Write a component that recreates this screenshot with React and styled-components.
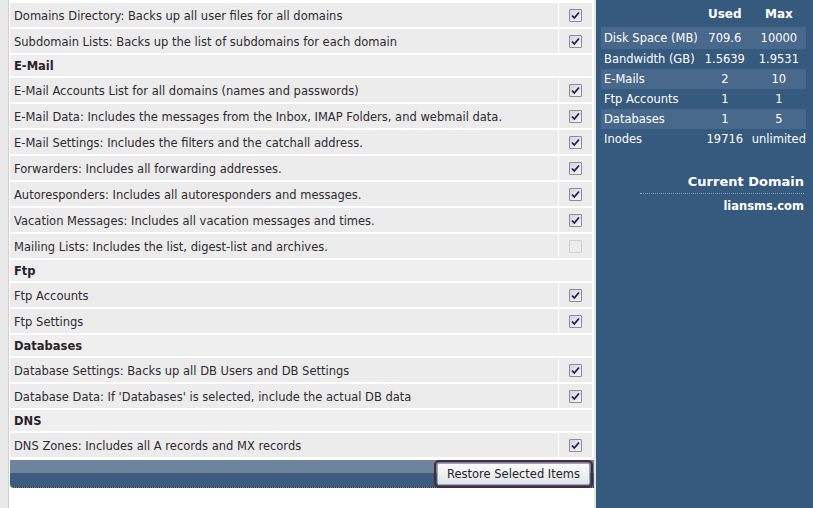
import React from 'react'
import styled, { createGlobalStyle } from 'styled-components'

const GlobalStyle = createGlobalStyle`
	html, body {
		margin: 0;
		padding: 0;
		background: #fff;
	}
	body {
		font-family: "DejaVu Sans", Verdana, sans-serif;
		font-size: 11.5px;
		color: #2f2a30;
	}
`

const sections = [
	{
		items: [
			{ label: 'Domains Directory: Backs up all user files for all domains', checked: true },
			{ label: 'Subdomain Lists: Backs up the list of subdomains for each domain', checked: true },
		],
	},
	{
		title: 'E-Mail',
		items: [
			{ label: 'E-Mail Accounts List for all domains (names and passwords)', checked: true },
			{ label: 'E-Mail Data: Includes the messages from the Inbox, IMAP Folders, and webmail data.', checked: true },
			{ label: 'E-Mail Settings: Includes the filters and the catchall address.', checked: true },
			{ label: 'Forwarders: Includes all forwarding addresses.', checked: true },
			{ label: 'Autoresponders: Includes all autoresponders and messages.', checked: true },
			{ label: 'Vacation Messages: Includes all vacation messages and times.', checked: true },
			{ label: 'Mailing Lists: Includes the list, digest-list and archives.', checked: false, disabled: true },
		],
	},
	{
		title: 'Ftp',
		items: [
			{ label: 'Ftp Accounts', checked: true },
			{ label: 'Ftp Settings', checked: true },
		],
	},
	{
		title: 'Databases',
		items: [
			{ label: 'Database Settings: Backs up all DB Users and DB Settings', checked: true },
			{ label: "Database Data: If 'Databases' is selected, include the actual DB data", checked: true },
		],
	},
	{
		title: 'DNS',
		items: [{ label: 'DNS Zones: Includes all A records and MX records', checked: true }],
	},
]

const usage = [
	{ name: 'Disk Space (MB)', used: '709.6', max: '10000', shaded: true, tall: true },
	{ name: 'Bandwidth (GB)', used: '1.5639', max: '1.9531' },
	{ name: 'E-Mails', used: '2', max: '10', shaded: true },
	{ name: 'Ftp Accounts', used: '1', max: '1' },
	{ name: 'Databases', used: '1', max: '5', shaded: true },
	{ name: 'Inodes', used: '19716', max: 'unlimited' },
]

const Check = ({ checked, disabled }) => (
	<Box $disabled={disabled}>
		{checked && (
			<svg width="9" height="9" viewBox="0 0 9 9">
				<path d="M1 4.5 L3.3 7 L8 1.5" fill="none" stroke="#1e1f4e" strokeWidth="1.8" />
			</svg>
		)}
	</Box>
)

const App = () => (
	<Page>
		<GlobalStyle />
		<Main>
			<List>
				{sections.map((section, i) => (
					<React.Fragment key={i}>
						{section.title && <Heading>{section.title}</Heading>}
						{section.items.map((item) => (
							<Row key={item.label}>
								<Label>{item.label}</Label>
								<CheckCell>
									<Check checked={item.checked} disabled={item.disabled} />
								</CheckCell>
							</Row>
						))}
					</React.Fragment>
				))}
				<Bar>
					<Restore>Restore Selected Items</Restore>
				</Bar>
			</List>
		</Main>
		<Side>
			<Stats>
				<thead>
					<tr>
						<Th />
						<Th>Used</Th>
						<Th>Max</Th>
					</tr>
				</thead>
				<tbody>
					{usage.map((u) => (
						<StatRow key={u.name} $shaded={u.shaded} $tall={u.tall}>
							<StatName>{u.name}</StatName>
							<StatValue>{u.used}</StatValue>
							<StatValue>{u.max}</StatValue>
						</StatRow>
					))}
				</tbody>
			</Stats>
			<Domain>
				<DomainTitle>Current Domain</DomainTitle>
				<DomainName>liansms.com</DomainName>
			</Domain>
		</Side>
	</Page>
)

export default App

const Page = styled.div`
	display: grid;
	grid-template-columns: 596px 1fr;
	height: 508px;
	overflow: hidden;
`

const Main = styled.div`
	padding: 3px 2px 0 10px;
	background:
		linear-gradient(to right, #e9e9e9 0 8px, #cfcfcf 8px 9px, #fff 9px) no-repeat;
	background-color: #fff;
	border-right: 2px solid #e4e4e4;
	box-sizing: border-box;
`

const List = styled.div`
	display: flex;
	flex-direction: column;
	gap: 2px;
`

const Row = styled.div`
	display: grid;
	grid-template-columns: 1fr 33px;
	gap: 1px;
	height: 24px;
`

const Label = styled.div`
	display: flex;
	align-items: center;
	padding: 1px 0 0 4px;
	background: #ececec;
	white-space: nowrap;
	overflow: hidden;
`

const CheckCell = styled.div`
	display: flex;
	align-items: center;
	justify-content: center;
	background: #ececec;
`

const Heading = styled.div`
	display: flex;
	align-items: center;
	height: 21px;
	padding: 1px 0 0 4px;
	box-sizing: border-box;
	background: #efefef;
	font-weight: bold;
	color: #2a2228;
`

const Box = styled.span`
	display: flex;
	align-items: center;
	justify-content: center;
	width: 11px;
	height: 11px;
	border: 1px solid ${({ $disabled }) => ($disabled ? '#cfcfcf' : '#8c8c96')};
	border-radius: 1px;
	background: ${({ $disabled }) =>
		$disabled ? '#ececec' : 'linear-gradient(135deg, #d4d4dc, #f6f6f8)'};
`

const Bar = styled.div`
	display: flex;
	justify-content: flex-end;
	align-items: center;
	height: 27px;
	margin-top: 1px;
	margin-right: -2px;
	padding-right: 4px;
	border-radius: 0 0 0 4px;
	border-bottom: 1px dotted #5a2a3a;
	background: linear-gradient(#6e849d 0 50%, #3b5c81 50%);
`

const Restore = styled.button`
	height: 22px;
	padding: 0 9px;
	font-family: "DejaVu Sans", Verdana, sans-serif;
	font-size: 11.5px;
	color: #222;
	background: linear-gradient(#fbfbfb, #e2e4e8);
	border: 1px solid #9aa6b6;
	border-radius: 2px;
	outline: 2px solid #4a2a34;
	outline-offset: 1px;
`

const Side = styled.div`
	background: #36597e;
	color: #fff;
	padding: 0 7px 0 5px;
`

const Stats = styled.table`
	width: 205px;
	border-collapse: collapse;
	font-size: 11.5px;
`

const Th = styled.th`
	height: 27px;
	padding: 0;
	font-size: 12px;
	text-align: center;
	vertical-align: middle;
	&:nth-child(2) {
		width: 55px;
	}
	&:nth-child(3) {
		width: 51px;
	}
`

const StatRow = styled.tr`
	height: ${({ $tall }) => ($tall ? '22px' : '20px')};
	background: ${({ $shaded }) => ($shaded ? '#48688c' : 'transparent')};
`

const StatName = styled.td`
	padding: 0 0 0 3px;
	white-space: nowrap;
`

const StatValue = styled.td`
	padding: 0;
	text-align: center;
	white-space: nowrap;
`

const Domain = styled.div`
	display: flex;
	flex-direction: column;
	align-items: flex-end;
	margin-top: 25px;
	padding-right: 2px;
`

const DomainTitle = styled.div`
	width: 164px;
	text-align: right;
	font-size: 13px;
	font-weight: bold;
	padding-bottom: 4px;
	border-bottom: 1px dotted #8ea4bd;
`

const DomainName = styled.div`
	margin-top: 5px;
	font-size: 11.5px;
	font-weight: bold;
`
